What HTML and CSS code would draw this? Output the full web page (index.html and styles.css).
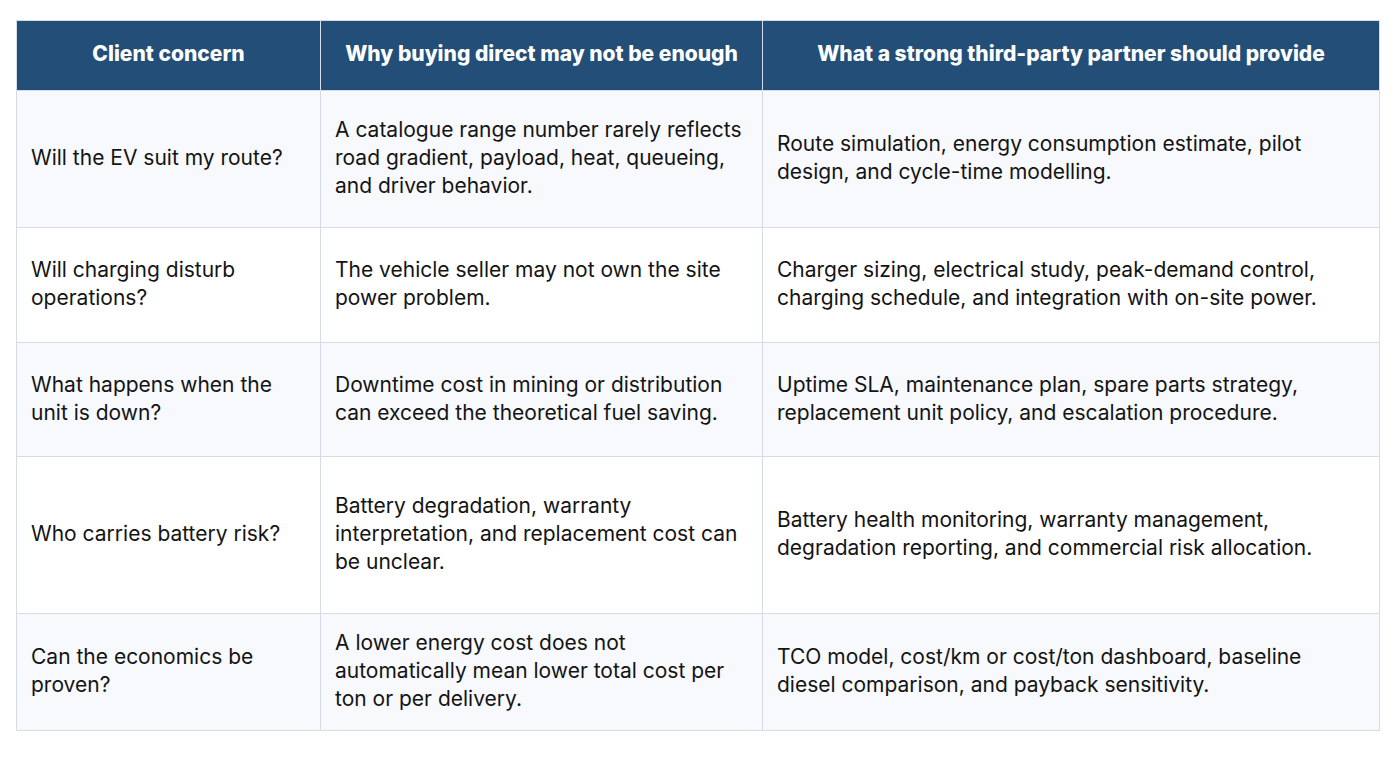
FILE: index.html
```html
<!DOCTYPE html>
<html>
<head>
<meta charset="utf-8">
<link rel="stylesheet" href="styles.css">
</head>
<body>
<table class="grid">
  <colgroup>
    <col class="c1"><col class="c2"><col class="c3">
  </colgroup>
  <thead>
    <tr class="head">
      <th>Client concern</th>
      <th>Why buying direct may not be enough</th>
      <th>What a strong third-party partner should provide</th>
    </tr>
  </thead>
  <tbody>
    <tr class="r1 alt">
      <td>Will the EV suit my route?</td>
      <td>A catalogue range number rarely reflects road gradient, payload, heat, queueing, and driver behavior.</td>
      <td>Route simulation, energy consumption estimate, pilot design, and cycle-time modelling.</td>
    </tr>
    <tr class="r2">
      <td>Will charging disturb operations?</td>
      <td>The vehicle seller may not own the site power problem.</td>
      <td>Charger sizing, electrical study, peak-demand control, charging schedule, and integration with on-site power.</td>
    </tr>
    <tr class="r3 alt">
      <td>What happens when the unit is down?</td>
      <td>Downtime cost in mining or distribution can exceed the theoretical fuel saving.</td>
      <td>Uptime SLA, maintenance plan, spare parts strategy, replacement unit policy, and escalation procedure.</td>
    </tr>
    <tr class="r4">
      <td>Who carries battery risk?</td>
      <td>Battery degradation, warranty interpretation, and replacement cost can be unclear.</td>
      <td>Battery health monitoring, warranty management, degradation reporting, and commercial risk allocation.</td>
    </tr>
    <tr class="r5 alt">
      <td>Can the economics be proven?</td>
      <td>A lower energy cost does not automatically mean lower total cost per ton or per delivery.</td>
      <td>TCO model, cost/km or cost/ton dashboard, baseline diesel comparison, and payback sensitivity.</td>
    </tr>
  </tbody>
</table>
</body>
</html>
```

FILE: styles.css
```css
html, body {
  margin: 0;
  padding: 0;
  background: #ffffff;
}
body {
  padding: 20px 0 0 16px;
  font-family: "Inter", "Open Sans", "Liberation Sans", sans-serif;
  color: #111111;
}
.grid {
  border-collapse: collapse;
  table-layout: fixed;
  width: 1363px;
}
.c1 { width: 304px; }
.c2 { width: 442px; }
.c3 { width: 617px; }
.grid th, .grid td {
  border: 1px solid #d3dce8;
  padding: 0 14px 0 14px;
  vertical-align: middle;
  text-align: left;
  font-size: 21px;
  line-height: 28px;
}
.grid td {
  font-weight: 400;
  color: #141414;
  padding-bottom: 2px;
}
.grid td:nth-child(3) {
  padding-right: 40px;
}
.head th {
  background: #224e78;
  color: #ffffff;
  font-weight: 800;
  text-align: center;
  height: 66px;
  font-size: 21px;
  padding: 0 10px 3px 10px;
}
.alt td { background: #f7f9fc; }
.r1 { height: 137px; }
.r2 { height: 115px; }
.r3 { height: 114px; }
.r4 { height: 157px; }
.r5 { height: 117px; }
```
